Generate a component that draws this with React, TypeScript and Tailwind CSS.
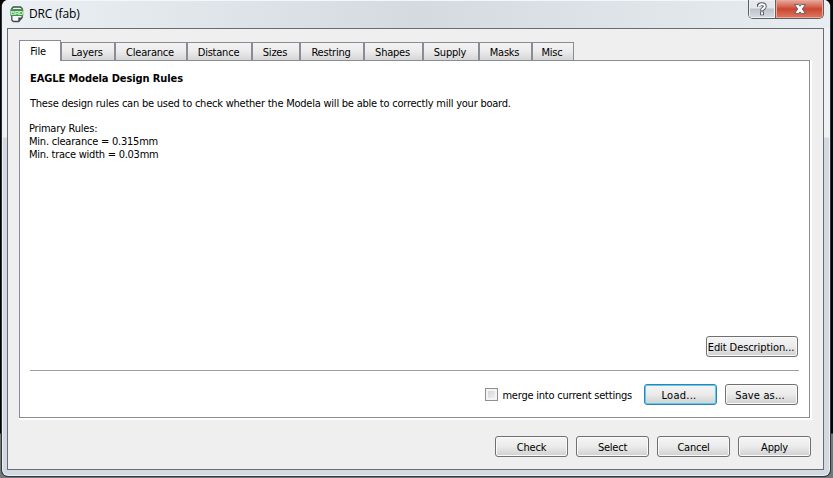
import { useState } from "react";

const tabs = [
  { name: "File", size: "w-[42px]" },
  { name: "Layers", size: "w-[54px]" },
  { name: "Clearance", size: "w-[72px]" },
  { name: "Distance", size: "w-[65px]" },
  { name: "Sizes", size: "w-[48px]" },
  { name: "Restring", size: "w-[64px]" },
  { name: "Shapes", size: "w-[59px]" },
  { name: "Supply", size: "w-[56px]" },
  { name: "Masks", size: "w-[53px]" },
  { name: "Misc", size: "w-[42px]" },
];

function BoardIcon() {
  return (
    <svg width="14" height="17" viewBox="0 0 14 17">
      <path
        d="M3.3 1h7.3L12.2 2.500v9L8.700 15.500H3.300L1.800 14V2.500z"
        fill="#f4f6f7"
        stroke="#454c50"
        strokeWidth="1.3"
      />
      <path d="M8.300 15.500v-4H12z" fill="#454c50" />
      <rect x="0.3" y="3" width="13" height="7" rx="0.8" fill="#3c9743" />
      <text
        x="6.8"
        y="8.8"
        textAnchor="middle"
        fontSize="6.2"
        letterSpacing="-0.3"
        fontWeight="bold"
        fontFamily="Liberation Sans, sans-serif"
        fill="#e6f7e4"
      >
        BRD
      </text>
    </svg>
  );
}

function TitleBar() {
  return (
    <div className="flex h-7 items-start rounded-t-[7px] bg-linear-to-r from-[#ebf0f4] via-[#d5dae1] to-[#e8edf1] shadow-[inset_0_1px_0_#f4f6f8]">
      <div className="mt-[6px] ml-[8px]">
        <BoardIcon />
      </div>
      <span className="mt-[6px] ml-[5px] font-['Open_Sans',sans-serif] text-[12px] leading-4 tracking-[-0.15px] text-black [font-stretch:normal]">
        DRC (fab)
      </span>
      <div className="mr-[6px] ml-auto flex h-[19px] overflow-hidden rounded-b-[5px] border border-t-0 border-[#5b5f66]">
        <button className="flex w-[27px] items-center justify-center border-r border-[#6b5a5e] bg-linear-to-b from-[#e4e7eb] from-45% via-[#bcc2ca] via-50% to-[#d9dde2] shadow-[inset_0_0_0_1px_#eef1f4]">
          <svg width="10" height="14" viewBox="0 0 10 14" fill="none">
            <path d="M1.400 4.800V4C1.800 1.700 7.800 1.300 7.800 4.400c0 1.900-2.800 2-2.800 4.300M5 9.400v3.800" stroke="#50545e" strokeWidth="3.8" />
            <path d="M2 4.600C1.800 1.700 7.800 1.300 7.800 4.400c0 1.900-2.800 2-2.800 3.800M5 10.200v2.200" stroke="#fff" strokeWidth="2" />
          </svg>
        </button>
        <button className="flex w-[47px] items-center justify-center bg-linear-to-b from-[#e3a294] from-5% via-[#cb4530] via-50% to-[#dd7860] shadow-[inset_0_0_0_1px_#eba797]">
          <svg width="12" height="10" viewBox="0 0 12 10">
            <path
              d="M.6.600h4L6 2.100 7.400.600h4L8.300 5l3.100 4.400h-4L6 7.900 4.600 9.400h-4L3.700 5z"
              fill="#fff"
              stroke="#57545e"
              strokeWidth="0.9"
            />
          </svg>
        </button>
      </div>
    </div>
  );
}

function Button({ label, className = "", active = false }: { label: string; className?: string; active?: boolean }) {
  return (
    <button
      className={`flex h-[21px] shrink-0 items-center justify-center rounded-[3px] border bg-linear-to-b from-[#f3f3f3] from-10% via-[#ebebeb] via-49% to-[#d0d0d0] whitespace-nowrap ${
        active
          ? "border-[#377fae] shadow-[inset_0_0_0_1px_#55cdf5]"
          : "border-[#707070] shadow-[inset_0_0_0_1px_#fafafa]"
      } ${className}`}
    >
      {label}
    </button>
  );
}

function App() {
  const [tab, setTab] = useState("File");
  const [merge, setMerge] = useState(false);

  return (
    <div className="h-[478px] w-[833px] overflow-hidden bg-linear-to-b from-[#050505] from-[433px] to-[#777] to-[434px] pl-px font-['DejaVu_Sans_Condensed','DejaVu_Sans',sans-serif] text-[11px] leading-[13px] tracking-[-0.22px] text-black [font-stretch:condensed]">
      <div className="flex h-[477px] w-[830px] flex-col rounded-[7px] border border-t-0 border-[#30343a] bg-linear-to-b from-[#eef2f5] from-[137px] to-[#d2d9e1] to-[138px] shadow-[inset_0_0_0_1px_#eef2f6]">
        <TitleBar />
        <div className="mr-[6px] ml-[5px] flex h-[442px] flex-col border border-[#696d73] bg-[#efefef] px-[11px] pt-[11px]">
          <div className="flex h-5 items-end">
            {tabs.map((t) => (
              <button
                key={t.name}
                onClick={() => setTab(t.name)}
                className={`${t.size} flex justify-center border border-b-0 border-[#898c95] ${
                  tab === t.name
                    ? "z-10 -mb-px h-[21px] items-start bg-white pt-[4px] pr-[4px]"
                    : "h-[18px] items-center bg-linear-to-b from-[#f3f3f3] via-[#ebebeb] via-50% to-[#d6d6d6] pt-px pr-[2px]"
                }`}
              >
                {t.name}
              </button>
            ))}
          </div>
          <div className="flex h-[358px] w-[791px] flex-col border border-[#898c95] bg-white pt-[11px] pr-[10px] pl-[10px] shadow-[1px_1px_0_1px_#fff]">
            <h1 className="font-bold tracking-[-0.1px]">EAGLE Modela Design Rules</h1>
            <p className="mt-[12px] tracking-[-0.23px]">
              These design rules can be used to check whether the Modela will be able to correctly mill your board.
            </p>
            <p className="mt-[12px] -ml-px">Primary Rules:</p>
            <p className="-ml-px">Min. clearance = 0.315mm</p>
            <p className="-ml-px tracking-[-0.25px]">Min. trace width = 0.03mm</p>
            <Button label="Edit Description..." className="mt-[175px] mr-px w-[92px] self-end pt-px pr-[2px] tracking-[-0.08px]" />
            <div className="mt-[13px] h-px shrink-0 bg-[#a0a0a0]" />
            <div className="mt-[13px] mr-px flex items-center justify-end gap-[8px]">
              <label className="mr-[4px] flex items-center gap-[4px]">
                <input
                  type="checkbox"
                  checked={merge}
                  onChange={() => setMerge(!merge)}
                  className="size-[13px] appearance-none border border-[#8e8f8f] bg-linear-to-br from-[#cbcfd5] to-[#f6f6f6] shadow-[inset_0_0_0_2px_#f4f4f4] checked:bg-[#4b6a9b]"
                />
                <span className="pt-px">merge into current settings</span>
              </label>
              <Button label="Load..." active className="w-[73px] pt-px pr-[3px] tracking-[0.25px]" />
              <Button label="Save as..." className="w-[73px] pt-px pr-[3px] tracking-[0.15px]" />
            </div>
          </div>
          <div className="mt-[18px] mr-px flex justify-end gap-[8px]">
            <Button label="Check" className="w-[73px] pt-px" />
            <Button label="Select" className="w-[73px] pt-px" />
            <Button label="Cancel" className="w-[73px] pt-px" />
            <Button label="Apply" className="w-[73px] pt-px" />
          </div>
        </div>
      </div>
    </div>
  );
}

export default App;
